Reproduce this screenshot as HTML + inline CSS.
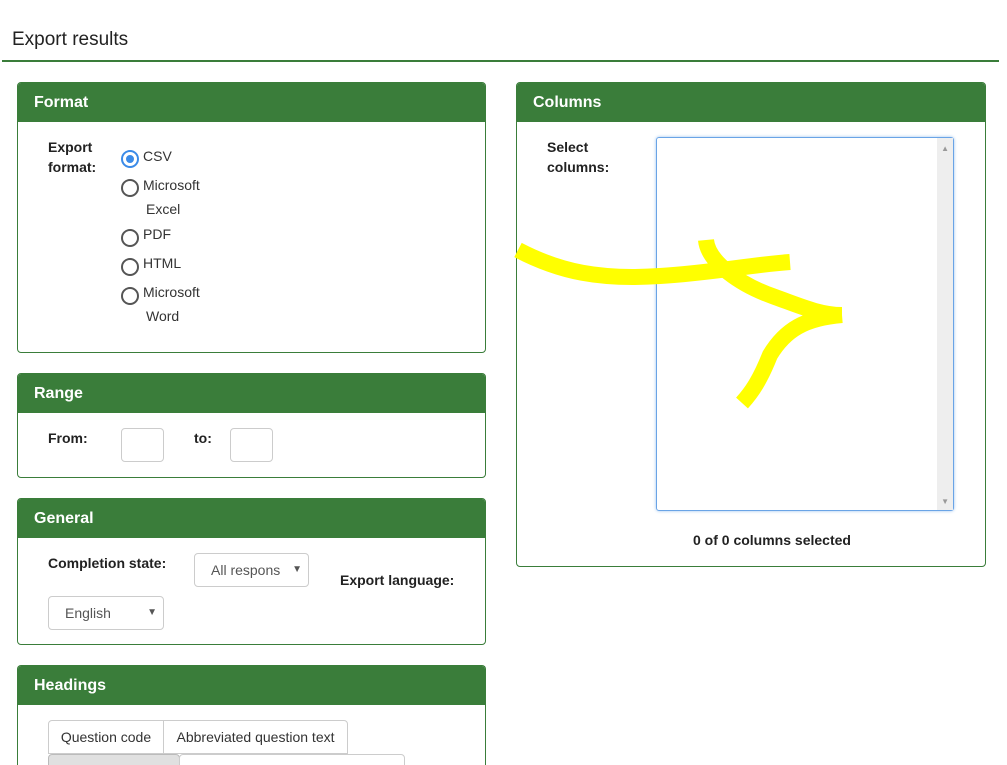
<!DOCTYPE html>
<html><head><meta charset="utf-8"><style>
*{box-sizing:border-box}
html,body{margin:0;width:1007px;height:765px;overflow:hidden}
body{background:#fff;font-family:"Liberation Sans",sans-serif;color:#333;position:relative}
.abs{position:absolute}
.panel{position:absolute;border:1px solid #3a7d3a;border-radius:4px;background:#fff;overflow:hidden}
.ph{background:#3a7d3a;color:#fff;font-weight:bold;font-size:16px;height:39px;line-height:40px;padding-left:16px}
.lbl{position:absolute;font-weight:bold;font-size:14px;line-height:20px;color:#222}
.t{position:absolute;font-size:14px;color:#333}
.radio{position:absolute;width:18px;height:18px;border:2px solid #555;border-radius:50%}
.sel{position:absolute;border:1px solid #ccc;border-radius:4px;font-size:14px;color:#555}
</style></head><body>
<div class="abs" style="left:12px;top:29px;font-size:19px;color:#222">Export results</div>
<div class="abs" style="left:2px;top:60px;width:997px;height:2px;background:#3a7d3a"></div>

<div class="panel" style="left:17px;top:82px;width:469px;height:271px">
<div class="ph">Format</div>
<div class="lbl" style="left:30px;top:54px">Export<br>format:</div>
<div class="radio" style="left:103px;top:67px;border-color:#3b8be8"><div style="position:absolute;left:3px;top:3px;width:8px;height:8px;border-radius:50%;background:#3b8be8"></div></div>
<div class="t" style="left:125px;top:65px">CSV</div>
<div class="radio" style="left:103px;top:96px"></div>
<div class="t" style="left:125px;top:94px">Microsoft</div>
<div class="t" style="left:128px;top:118px">Excel</div>
<div class="radio" style="left:103px;top:146px"></div>
<div class="t" style="left:125px;top:143px">PDF</div>
<div class="radio" style="left:103px;top:175px"></div>
<div class="t" style="left:125px;top:172px">HTML</div>
<div class="radio" style="left:103px;top:204px"></div>
<div class="t" style="left:125px;top:201px">Microsoft</div>
<div class="t" style="left:128px;top:225px">Word</div>
</div>

<div class="panel" style="left:17px;top:373px;width:469px;height:105px">
<div class="ph">Range</div>
<div class="lbl" style="left:30px;top:54px">From:</div>
<div class="sel" style="left:103px;top:54px;width:43px;height:34px"></div>
<div class="lbl" style="left:176px;top:54px">to:</div>
<div class="sel" style="left:212px;top:54px;width:43px;height:34px"></div>
</div>

<div class="panel" style="left:17px;top:498px;width:469px;height:147px">
<div class="ph">General</div>
<div class="lbl" style="left:30px;top:54px">Completion state:</div>
<div class="sel" style="left:176px;top:54px;width:115px;height:34px;line-height:32px;padding-left:16px">All respons<span style="position:absolute;right:6px;font-size:10px">▼</span></div>
<div class="lbl" style="left:322px;top:71px">Export language:</div>
<div class="sel" style="left:30px;top:97px;width:116px;height:34px;line-height:32px;padding-left:16px">English<span style="position:absolute;right:6px;font-size:10px">▼</span></div>
</div>

<div class="panel" style="left:17px;top:665px;width:469px;height:100px;border-bottom:none;border-radius:4px 4px 0 0">
<div class="ph">Headings</div>
<div class="sel" style="left:30px;top:54px;width:116px;height:34px;line-height:32px;text-align:center;color:#333;border-radius:4px 0 0 0">Question code</div>
<div class="sel" style="left:145px;top:54px;width:185px;height:34px;line-height:32px;text-align:center;color:#333;border-radius:0 4px 0 0">Abbreviated question text</div>
<div class="sel" style="left:30px;top:88px;width:132px;height:34px;background:#e0e0e0;border-color:#bbb"></div>
<div class="sel" style="left:161px;top:88px;width:226px;height:34px"></div>
</div>

<div class="panel" style="left:516px;top:82px;width:470px;height:485px">
<div class="ph">Columns</div>
<div class="lbl" style="left:30px;top:54px">Select<br>columns:</div>
<div class="abs" style="left:139px;top:54px;width:298px;height:374px;border:1px solid #6aa4e6;border-radius:3px;box-shadow:0 0 3px #9cc3ef">
<div class="abs" style="right:0;top:0;width:16px;height:100%;background:#eee"></div>
<div class="abs" style="right:4px;top:6px;font-size:8px;color:#999">▲</div>
<div class="abs" style="right:4px;bottom:4px;font-size:8px;color:#999">▼</div>
</div>
<div class="lbl" style="left:176px;top:447px">0 of 0 columns selected</div>
</div>

<svg class="abs" style="left:0;top:0" width="1007" height="765">
<g fill="none" stroke="#ffff00" stroke-width="16" stroke-linejoin="round">
<path d="M518 250 C560 272 600 280 660 276 C710 273 750 265 790 262"/>
<path d="M706 240 C708 262 740 285 775 297 C800 306 820 315 842 315"/>
<path d="M842 315 C805 318 785 330 770 355 C760 380 752 392 742 403"/>
</g></svg>
</body></html>
